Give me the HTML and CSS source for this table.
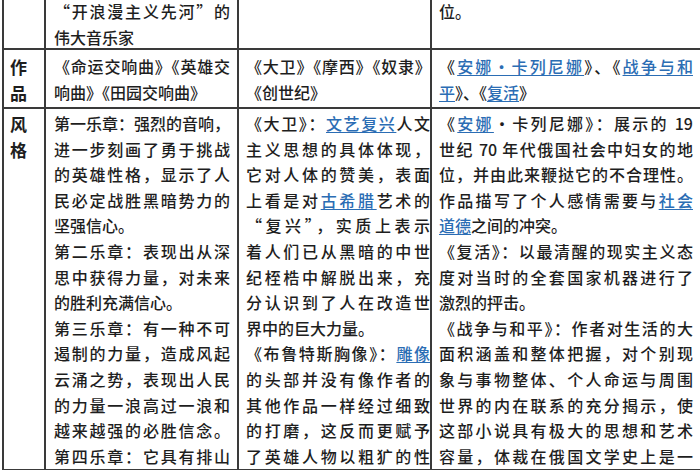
FILE: index.html
```html
<!DOCTYPE html>
<html lang="zh-CN">
<head>
<meta charset="utf-8">
<title>贝多芬 米开朗琪罗 托尔斯泰</title>
<link rel="stylesheet" href="styles.css">
</head>
<body>
<div class="sheet">
  <div class="cell lab r1"></div>
  <div class="cell c2 r1">
    <div class="ln j">“开浪漫主义先河”的</div>
    <div class="ln">伟大音乐家</div>
  </div>
  <div class="cell c3 r1"></div>
  <div class="cell c4 r1">
    <div class="ln">位。</div>
  </div>

  <div class="cell lab r2">
    <div class="ln">作</div>
    <div class="ln">品</div>
  </div>
  <div class="cell c2 r2">
    <div class="ln j">《命运交响曲》《英雄交</div>
    <div class="ln">响曲》《田园交响曲》</div>
  </div>
  <div class="cell c3 r2">
    <div class="ln j tight">《大卫》《摩西》《奴隶》</div>
    <div class="ln">《创世纪》</div>
  </div>
  <div class="cell c4 r2">
    <div class="ln j">《<a class="lk">安娜·卡列尼娜</a>》、《<a class="lk">战争与和</a></div>
    <div class="ln"><a class="lk">平</a>》、《<a class="lk">复活</a>》</div>
  </div>

  <div class="cell lab r3">
    <div class="ln">风</div>
    <div class="ln">格</div>
  </div>
  <div class="cell c2 r3">
    <div class="ln j">第一乐章：强烈的音响，</div>
    <div class="ln j">进一步刻画了勇于挑战</div>
    <div class="ln j">的英雄性格，显示了人</div>
    <div class="ln j">民必定战胜黑暗势力的</div>
    <div class="ln">坚强信心。</div>
    <div class="ln j">第二乐章：表现出从深</div>
    <div class="ln j">思中获得力量，对未来</div>
    <div class="ln">的胜利充满信心。</div>
    <div class="ln j">第三乐章：有一种不可</div>
    <div class="ln j">遏制的力量，造成风起</div>
    <div class="ln j">云涌之势，表现出人民</div>
    <div class="ln j">的力量一浪高过一浪和</div>
    <div class="ln j">越来越强的必胜信念。</div>
    <div class="ln j">第四乐章：它具有排山</div>
  </div>
  <div class="cell c3 r3">
    <div class="ln j">《大卫》：<a class="lk">文艺复兴</a>人文</div>
    <div class="ln j">主义思想的具体体现，</div>
    <div class="ln j">它对人体的赞美，表面</div>
    <div class="ln j">上看是对<a class="lk">古希腊</a>艺术的</div>
    <div class="ln j">“复兴”，实质上表示</div>
    <div class="ln j">着人们已从黑暗的中世</div>
    <div class="ln j">纪桎梏中解脱出来，充</div>
    <div class="ln j">分认识到了人在改造世</div>
    <div class="ln">界中的巨大力量。</div>
    <div class="ln j">《布鲁特斯胸像》：<a class="lk">雕像</a></div>
    <div class="ln j">的头部并没有像作者的</div>
    <div class="ln j">其他作品一样经过细致</div>
    <div class="ln j">的打磨，这反而更赋予</div>
    <div class="ln j">了英雄人物以粗犷的性</div>
  </div>
  <div class="cell c4 r3">
    <div class="ln j">《<a class="lk">安娜</a>·卡列尼娜》：展示的 19</div>
    <div class="ln j">世纪 70 年代俄国社会中妇女的地</div>
    <div class="ln j">位，并由此来鞭挞它的不合理性。</div>
    <div class="ln j">作品描写了个人感情需要与<a class="lk">社会</a></div>
    <div class="ln"><a class="lk">道德</a>之间的冲突。</div>
    <div class="ln j">《复活》：以最清醒的现实主义态</div>
    <div class="ln j">度对当时的全套国家机器进行了</div>
    <div class="ln">激烈的抨击。</div>
    <div class="ln j">《战争与和平》：作者对生活的大</div>
    <div class="ln j">面积涵盖和整体把握，对个别现</div>
    <div class="ln j">象与事物整体、个人命运与周围</div>
    <div class="ln j">世界的内在联系的充分揭示，使</div>
    <div class="ln j">这部小说具有极大的思想和艺术</div>
    <div class="ln j">容量，体裁在俄国文学史上是一</div>
  </div>
</div>
</body>
</html>
```
FILE: styles.css
```css
html, body {
  margin: 0;
  padding: 0;
  background: #ffffff;
  overflow: hidden;
}

body {
  font-family: "Noto Sans CJK SC", "Noto Sans", sans-serif;
  font-size: 16px;
  font-weight: 500;
  line-height: 25.6px;
  color: #1e1e1e;
}

.sheet {
  display: grid;
  grid-template-columns: 42px 193px 193px 300px;
  grid-template-rows: 51px 59px auto;
  margin: -1px 0 0 2px;
  border-left: 2px solid #3a3a3a;
}

.cell {
  border-right: 2px solid #3a3a3a;
  border-bottom: 2px solid #3a3a3a;
}

.r1 { padding-top: 0; }
.r2 { padding-top: 4px; }
.r3 { padding-top: 2px; }

.lab {
  padding-left: 6px;
  font-size: 17px;
  font-weight: 700;
}

.c2 {
  padding-left: 8px;
  padding-right: 7px;
}

.c3 {
  padding-left: 7px;
  padding-right: 0;
}

.c4 {
  padding-left: 7px;
  padding-right: 37px;
}

.ln {
  display: block;
}

.j {
  text-align: justify;
  text-align-last: justify;
}

.tight {
  letter-spacing: -0.8px;
}

.lk {
  color: #2b6db4;
  text-decoration: underline;
  text-underline-offset: 2px;
}
```
